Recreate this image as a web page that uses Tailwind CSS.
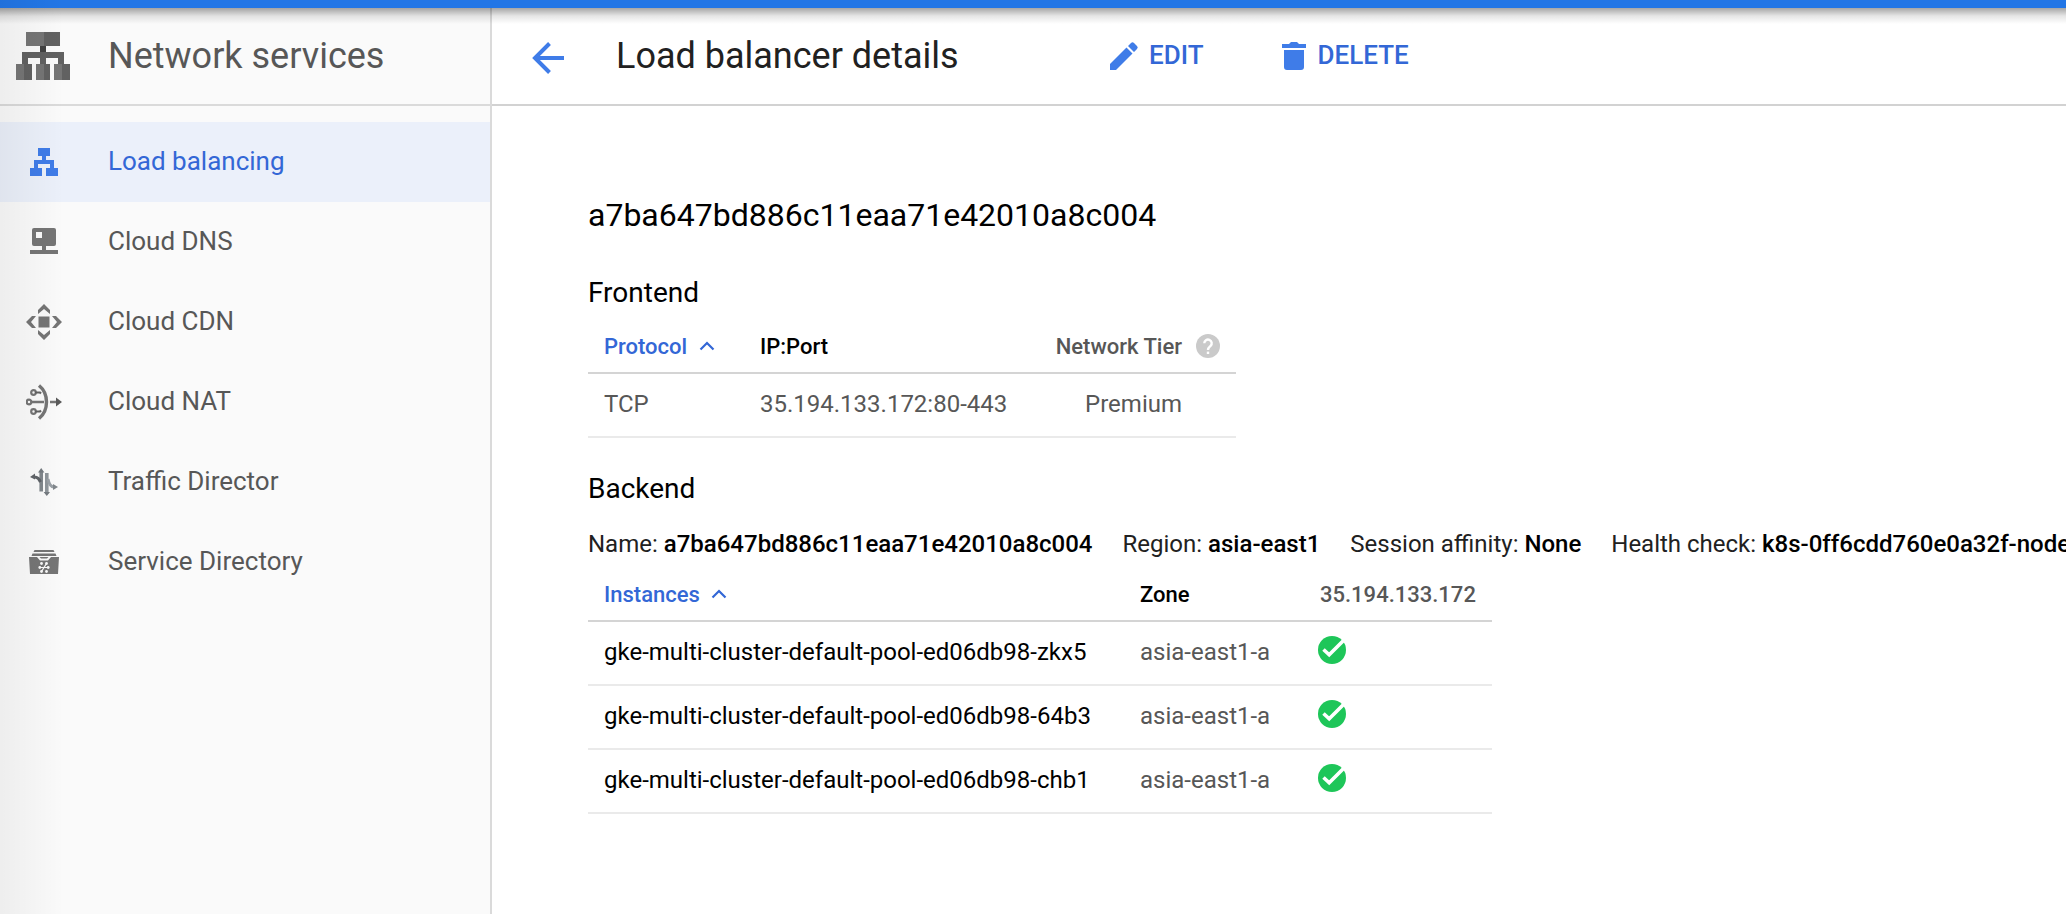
<!DOCTYPE html>
<html lang="en">
<head>
<meta charset="utf-8">
<title>Load balancer details</title>
<script src="https://cdn.jsdelivr.net/npm/@tailwindcss/browser@4"></script>
</head>
<body class="relative flex h-[914px] w-[2066px] flex-col overflow-hidden bg-white font-['Roboto',sans-serif] text-[24px] text-black">
<div class="h-2 shrink-0 bg-[#2276e6]"></div>
<div class="flex min-h-0 flex-1">
  <aside class="flex w-[492px] shrink-0 flex-col border-r-2 border-[#dadada] bg-[#fafafa]">
    <header class="flex h-[98px] shrink-0 items-center border-b-2 border-[#dadada] pl-4">
      <svg class="h-12 w-[54px]" viewBox="0 0 54 48" shape-rendering="crispEdges">
        <path fill="#757575" d="M10 0h18v14H10zM0 32h8v16H0zM20 32h8v16h-8zM38 32h8v16h-8z"/>
        <path fill="#616161" d="M28 0h16v14H28zM8 32h8v16H8zM28 32h6v16h-6zM46 32h8v16h-8zM6 20h42v12h-6v-6H30v6h-6v-6H12v6H6z"/>
        <path fill="#424242" d="M24 14h6v6h-6z"/>
      </svg>
      <h1 class="pl-[38px] text-[36px] leading-10 text-[#575757]">Network services</h1>
    </header>
    <nav class="flex flex-col pt-4 text-[26px] text-[#575757]">
      <a class="flex h-20 items-center gap-[46px] bg-[#ebf0fa] pl-[26px] text-[#3367d6]">
        <svg class="size-9" viewBox="0 0 36 36" shape-rendering="crispEdges"><path fill="#3f7ce8" d="M12 4h12v8h-4v4h8v8h4v8H20v-8h4v-4H12v4h4v8H4v-8h4v-8h8v-4h-4z"/></svg>
        <span class="pb-0.5">Load balancing</span>
      </a>
      <a class="flex h-20 items-center gap-[46px] pl-[26px]">
        <svg class="size-9" viewBox="0 0 36 36" fill="#757575"><path fill-rule="evenodd" d="M8 4h20a2 2 0 0 1 2 2v14a2 2 0 0 1-2 2H20v4h12v4H4v-4h12v-4H8a2 2 0 0 1-2-2V6a2 2 0 0 1 2-2zM10 8v6h6V8z"/></svg>
        <span class="pb-0.5">Cloud DNS</span>
      </a>
      <a class="flex h-20 items-center gap-[46px] pl-[26px]">
        <svg class="size-9" viewBox="0 0 36 36" fill="#757575"><path d="M12.500 12.500h11v11h-11zM18 0l6 6v4l-6-5-6 5V6zM18 36l6-6v-4l-6 5-6-5v4zM0 18l6-6h4l-5 6 5 6H6zM36 18l-6-6h-4l5 6-5 6h4z"/></svg>
        <span class="pb-0.5">Cloud CDN</span>
      </a>
      <a class="flex h-20 items-center gap-[46px] pl-[26px]">
        <svg class="size-9" viewBox="0 0 36 36" fill="none" stroke="#757575" stroke-width="2.200"><path stroke-width="3.400" d="M13 1.500C23 9.500 23 26.500 13 34.500"/><circle cx="7.500" cy="8.500" r="2.300"/><circle cx="3" cy="18" r="2.300"/><circle cx="7.500" cy="27.500" r="2.300"/><path stroke="#616161" d="M9 8.500h5l1 1M9 27.500h5l1-1"/><path stroke-width="2.600" d="M5 18h13M24 18h8"/><path fill="#5a5a5a" stroke="none" d="M30 13.500l6 4.500-6 4.500z"/></svg>
        <span class="pb-0.5">Cloud NAT</span>
      </a>
      <a class="flex h-20 items-center gap-[46px] pl-[26px]">
        <svg class="size-9" viewBox="0 0 36 36" fill="none" stroke-width="3.600"><path stroke="#80868b" d="M15.200 7v20.500"/><path stroke="#8f959a" d="M20.800 9v20.500"/><path stroke="#5f6368" stroke-width="3" d="M8 13c4 0 5 2 6.500 5"/><path stroke="#9aa0a6" stroke-width="3" d="M22 15c1 5 3 8 6 8"/><path fill="#757b80" d="M12 8.500L15.200 4l3.200 4.500zM17.600 28l3.200 4 3.200-4z"/><path fill="#5f6368" d="M4 13l5-3.500v6z"/><path fill="#80868b" d="M32 23l-5 3v-6z"/></svg>
        <span class="pb-0.5">Traffic Director</span>
      </a>
      <a class="flex h-20 items-center gap-[46px] pl-[26px]">
        <svg class="size-9" viewBox="0 0 36 36" fill="#757575"><path d="M8.500 6h19l1 2h-21zM6.500 9.500h23l1 2.500h-25zM3 13h8l3 3.500h8l3-3.500h8l-1 17H4z"/><path d="M13.500 13h9l-1.500 1.500h-6z"/><g fill="#fafafa"><circle cx="15.500" cy="19.500" r="1.400"/><circle cx="20.500" cy="19.500" r="1.400"/><circle cx="13.800" cy="23.500" r="1.400"/><circle cx="22.200" cy="23.500" r="1.400"/><circle cx="15.500" cy="27.500" r="1.400"/><circle cx="20.500" cy="27.500" r="1.400"/></g><path fill="none" stroke="#fafafa" stroke-width="1.200" d="M13.800 23.500h8.400M20.500 19.500l-5 8"/></svg>
        <span class="pb-0.5">Service Directory</span>
      </a>
    </nav>
  </aside>
  <main class="flex min-w-0 flex-1 flex-col">
    <header class="flex h-[98px] shrink-0 items-center border-b-2 border-[#d2d2d2] pl-10 text-[26px] font-medium text-[#3367d6]">
      <svg class="mt-1 size-8" viewBox="0 0 32 32" fill="none" stroke="#3f7ce8" stroke-width="4"><path d="M32 16H4M17.500 1.500L3 16l14.500 14.500"/></svg>
      <h2 class="w-[546px] pl-[52px] text-[36px] leading-10 font-normal text-[#212121]">Load balancer details</h2>
      <button class="flex items-center">
        <svg class="-ml-[2px] size-8" viewBox="0 0 32 32" fill="#3f7ce8"><path d="M2 30v-6L18.500 7.500l6 6L8 30zM20 6l3-3q1.500-1.500 3 0l3 3q1.500 1.500 0 3l-3 3z"/></svg>
        <span class="pb-0.5 pl-[9px]">EDIT</span>
      </button>
      <button class="flex items-center pl-[78px]">
        <svg class="h-7 w-6" viewBox="0 0 24 28" fill="#3f7ce8"><path d="M0 2h7l2-2h6l2 2h7v4H0zM2 8h20v17a3 3 0 0 1-3 3H5a3 3 0 0 1-3-3z"/></svg>
        <span class="pb-0.5 pl-3">DELETE</span>
      </button>
    </header>
    <div class="flex flex-col pl-24 whitespace-nowrap">
      <h3 class="mt-[89px] text-[32px] leading-10">a7ba647bd886c11eaa71e42010a8c004</h3>
      <h4 class="mt-[38px] text-[28px] leading-10">Frontend</h4>
      <section class="mt-[7px] w-[648px]">
        <div class="flex h-[54px] items-center border-b-2 border-[#d4d4d4] pl-4 text-[22px] font-medium">
          <div class="flex w-[156px] items-center gap-3 text-[#3367d6]">Protocol<svg class="h-[10px] w-4" viewBox="0 0 16 10" fill="none" stroke="#3367d6" stroke-width="2.200"><path d="M1.500 8.500L8 2l6.500 6.500"/></svg></div>
          <div class="w-[200px]">IP:Port</div>
          <div class="flex-1 text-right text-[#575757]">Network Tier</div>
          <svg class="mr-4 ml-[14px] size-6" viewBox="0 0 24 24"><circle cx="12" cy="12" r="12" fill="#cacaca"/><path fill="none" stroke="#fff" stroke-width="2.400" d="M8.300 9.300a3.700 3.700 0 1 1 6.300 2.600c-1.600 1.500-2.600 1.900-2.600 4"/><path fill="#fff" d="M10.800 17.600h2.400V20h-2.400z"/></svg>
        </div>
        <div class="flex h-16 items-center border-b-2 border-[#eaeaea] pr-[54px] pb-0.5 pl-4 text-[#575757]">
          <div class="w-[156px]">TCP</div><div>35.194.133.172:80-443</div><div class="flex-1 text-right">Premium</div>
        </div>
      </section>
      <h4 class="mt-[31px] text-[28px] leading-10">Backend</h4>
      <div class="mt-[17px] flex gap-[30px] leading-9 text-[#212121]">
        <div>Name: <b class="font-medium text-black">a7ba647bd886c11eaa71e42010a8c004</b></div>
        <div>Region: <b class="font-medium text-black">asia-east1</b></div>
        <div>Session affinity: <b class="font-medium text-black">None</b></div>
        <div>Health check: <b class="font-medium text-black">k8s-0ff6cdd760e0a32f-node</b></div>
      </div>
      <section class="w-[904px]">
        <div class="mt-[6px] flex h-[54px] items-center border-b-2 border-[#d4d4d4] pl-4 text-[22px] font-medium">
          <div class="flex w-[536px] items-center gap-[11px] text-[#3367d6]">Instances<svg class="h-[10px] w-4" viewBox="0 0 16 10" fill="none" stroke="#3367d6" stroke-width="2.200"><path d="M1.500 8.500L8 2l6.500 6.500"/></svg></div>
          <div class="w-[180px]">Zone</div>
          <div class="text-[#575757]">35.194.133.172</div>
        </div>
        <div class="flex h-16 items-center border-b-2 border-[#eaeaea] pb-0.5 pl-4">
          <div class="w-[536px]">gke-multi-cluster-default-pool-ed06db98-zkx5</div><div class="w-[178px] text-[#575757]">asia-east1-a</div>
          <svg class="-mt-1 size-7" viewBox="0 0 28 28"><circle cx="14" cy="14" r="14" fill="#1ec659"/><path fill="none" stroke="#fff" stroke-width="3.600" d="M5.500 13.500l5.700 5.300L25.500 4.500"/></svg>
        </div>
        <div class="flex h-16 items-center border-b-2 border-[#eaeaea] pb-0.5 pl-4">
          <div class="w-[536px]">gke-multi-cluster-default-pool-ed06db98-64b3</div><div class="w-[178px] text-[#575757]">asia-east1-a</div>
          <svg class="-mt-1 size-7" viewBox="0 0 28 28"><circle cx="14" cy="14" r="14" fill="#1ec659"/><path fill="none" stroke="#fff" stroke-width="3.600" d="M5.500 13.500l5.700 5.300L25.500 4.500"/></svg>
        </div>
        <div class="flex h-16 items-center border-b-2 border-[#eaeaea] pb-0.5 pl-4">
          <div class="w-[536px]">gke-multi-cluster-default-pool-ed06db98-chb1</div><div class="w-[178px] text-[#575757]">asia-east1-a</div>
          <svg class="-mt-1 size-7" viewBox="0 0 28 28"><circle cx="14" cy="14" r="14" fill="#1ec659"/><path fill="none" stroke="#fff" stroke-width="3.600" d="M5.500 13.500l5.700 5.300L25.500 4.500"/></svg>
        </div>
      </section>
    </div>
  </main>
</div>
<div class="absolute inset-x-0 top-2 h-4 bg-linear-to-b from-black/35 via-black/10 to-transparent"></div>
<div class="absolute inset-y-0 left-0 w-16 bg-linear-to-r from-black/5 to-transparent"></div>
</body>
</html>
